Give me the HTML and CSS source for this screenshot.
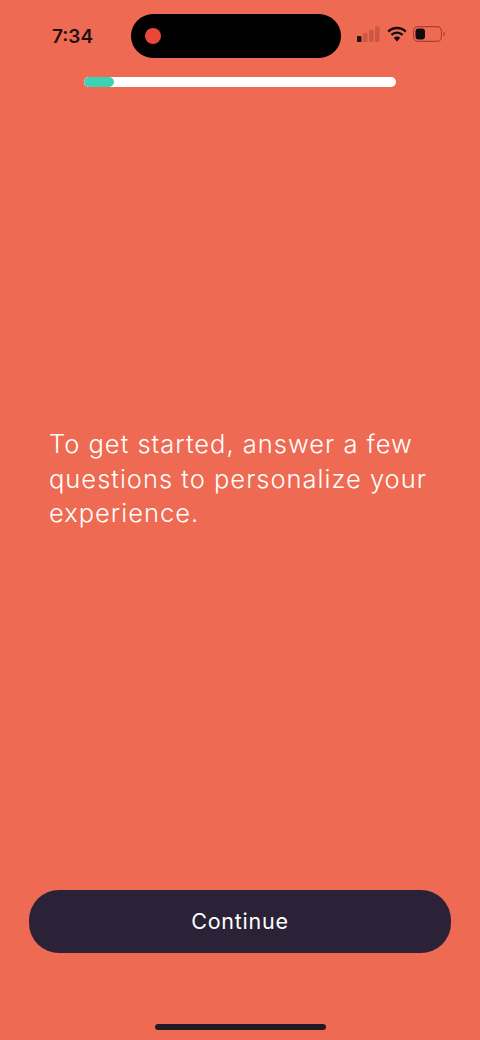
FILE: index.html
```html
<!DOCTYPE html>
<html lang="en">
<head>
<meta charset="utf-8">
<title>Get started</title>
<link rel="stylesheet" href="styles.css">
</head>
<body>
<div class="screen">
  <header class="status">
    <span class="time">7:34</span>
    <div class="island"><span class="rec"></span></div>
    <div class="status-icons">
      <svg class="signal" width="23" height="17" viewBox="0 0 23 17">
        <rect x="0" y="10" width="4.5" height="6" rx="1" fill="#1c1210"/>
        <rect x="6" y="7" width="4.5" height="9" rx="1" fill="#cc5743"/>
        <rect x="12" y="4" width="4.5" height="12" rx="1" fill="#cc5743"/>
        <rect x="18" y="0.5" width="4.5" height="15.5" rx="1" fill="#cc5743"/>
      </svg>
      <svg class="wifi" width="20" height="16" viewBox="0 0 20 16">
        <path d="M1.2 5.6a12.6 12.6 0 0 1 17.6 0" fill="none" stroke="#120c0c" stroke-width="2.3"/>
        <path d="M4.4 8.9a8 8 0 0 1 11.2 0" fill="none" stroke="#120c0c" stroke-width="2.3"/>
        <path d="M10 15.4l-3.2-3.6a4.6 4.6 0 0 1 6.4 0z" fill="#120c0c"/>
      </svg>
      <svg class="battery" width="32" height="16" viewBox="0 0 32 16">
        <rect x="0.6" y="0.6" width="27.8" height="14.8" rx="4.4" fill="none" stroke="#a8402f" stroke-width="1.1"/>
        <rect x="2.5" y="2.5" width="9.5" height="11" rx="3" fill="#120c0c"/>
        <path d="M30.5 5.8c1 .4 1.4 1.2 1.4 2.2s-.4 1.8-1.4 2.2z" fill="#a8402f"/>
      </svg>
    </div>
  </header>
  <div class="progress"><div class="progress-fill"></div></div>
  <main class="content">
    <p class="intro">To get started, answer a few questions to personalize your experience.</p>
  </main>
  <button class="cta" type="button">Continue</button>
  <div class="home-bar"></div>
</div>
</body>
</html>
```
FILE: styles.css
```css
* { box-sizing: border-box; }
html, body { margin: 0; padding: 0; }
body { background: #ef6a52; font-family: "Inter", "Liberation Sans", sans-serif; }
.screen {
  width: 480px;
  height: 1040px;
  display: flex;
  flex-direction: column;
  align-items: center;
  overflow: hidden;
  background: #ef6a52;
}
.status {
  width: 100%;
  height: 44px;
  margin-top: 14px;
  display: flex;
  align-items: center;
}
.time {
  width: 131px;
  padding-left: 52px;
  font-size: 19px;
  font-weight: 600;
  color: #1d1010;
}
.island {
  width: 210px;
  height: 44px;
  background: #000;
  border-radius: 22px;
  display: flex;
  align-items: center;
  padding-left: 14px;
}
.rec { width: 16px; height: 16px; border-radius: 50%; background: #e8473a; }
.status-icons {
  display: flex;
  align-items: center;
  padding-left: 16px;
  padding-bottom: 4px;
  gap: 7px;
}
.battery { margin-left: -1px; }
.progress {
  width: 312px;
  height: 10px;
  margin-top: 19px;
  background: #fff;
  border-radius: 5px;
  overflow: hidden;
}
.progress-fill { width: 30px; height: 100%; background: #3dd1b7; border-radius: 5px; }
.content {
  flex: 1;
  width: 100%;
  padding: 340px 49px 0;
}
.intro {
  margin: 0;
  font-size: 25.5px;
  font-weight: 350;
  line-height: 34.5px;
  letter-spacing: 1px;
  color: #fff;
}
.cta {
  width: 422px;
  height: 63px;
  border: 0;
  border-radius: 30px;
  padding-bottom: 3px;
  background: #2b2238;
  color: #fff;
  font-family: inherit;
  font-size: 21.5px;
  font-weight: 400;
  letter-spacing: 0.75px;
}
.home-bar {
  width: 171px;
  height: 6px;
  margin-top: 71px;
  margin-bottom: 10px;
  border-radius: 3px;
  background: #221a22;
}
```
